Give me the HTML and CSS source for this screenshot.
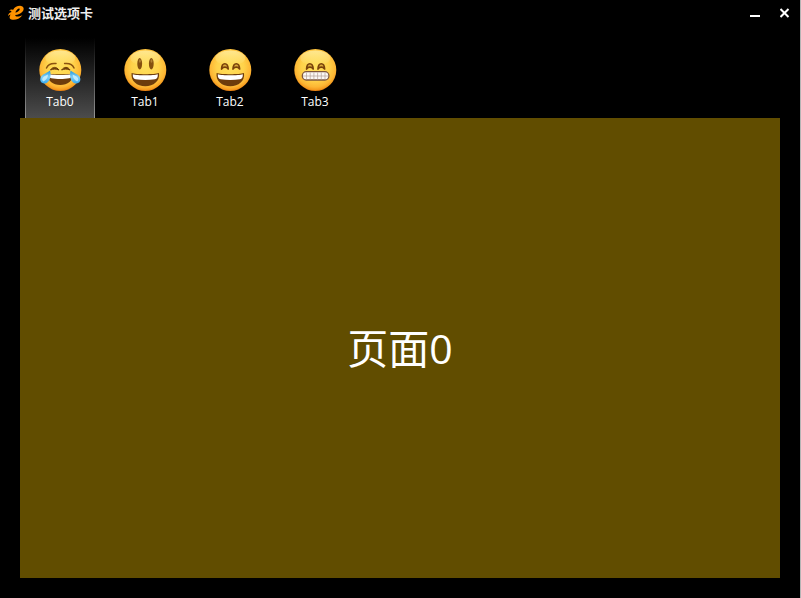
FILE: index.html
```html
<!DOCTYPE html>
<html lang="zh-CN">
<head>
<meta charset="utf-8">
<title>测试选项卡</title>
<link rel="stylesheet" href="styles.css">
</head>
<body>
<svg class="defs" width="0" height="0" aria-hidden="true">
  <defs>
    <radialGradient id="skin" cx="50%" cy="42%" r="59%">
      <stop offset="0" stop-color="#ffe05c"/>
      <stop offset=".55" stop-color="#ffd24a"/>
      <stop offset=".82" stop-color="#fdb634"/>
      <stop offset=".93" stop-color="#f59a1e"/>
      <stop offset="1" stop-color="#dc6f0c"/>
    </radialGradient>
    <linearGradient id="shine" x1="0" y1="0" x2="0" y2="1">
      <stop offset="0" stop-color="#fff6b8" stop-opacity=".65"/>
      <stop offset="1" stop-color="#fff6b8" stop-opacity="0"/>
    </linearGradient>
    <linearGradient id="tear" x1="0" y1="0" x2="0" y2="1">
      <stop offset="0" stop-color="#1f96dd"/>
      <stop offset=".5" stop-color="#7fd0f8"/>
      <stop offset="1" stop-color="#35a8ec"/>
    </linearGradient>
    <g id="face">
      <circle cx="22.3" cy="22" r="21" fill="url(#skin)"/>
      <ellipse cx="22.3" cy="10" rx="15" ry="7.5" fill="url(#shine)"/>
    </g>
    <g id="smile">
      <path d="M8.600 25C13 26.600 31.600 26.600 36 25C37.200 33 30.500 38.200 22.300 38.200S7.400 33 8.600 25Z" fill="#6d3c0c"/>
      <path d="M9.800 26.200C14 27.600 30.600 27.600 34.800 26.200C35 29.500 34 30.800 32 31.200C26 32.300 18.600 32.300 12.600 31.200C10.600 30.800 9.600 29.500 9.800 26.200Z" fill="#fff"/>
    </g>
    <g id="eyes" fill="#b87a22" fill-opacity=".5" stroke="#7a430b" stroke-width="1.700" stroke-linecap="round" stroke-linejoin="round">
      <path d="M13.600 21C13.800 14 19.800 14 20.200 21C18.400 18.600 15.400 18.600 13.600 21Z"/>
      <path d="M25 21C25.300 14 31.300 14 31.600 21C29.800 18.600 26.800 18.600 25 21Z"/>
    </g>
  </defs>
</svg>
<div class="window">
  <header class="titlebar">
    <svg class="logo" viewBox="0 0 16 16" aria-hidden="true">
      <path d="M1 5.500C2.600 4.400 4 4.400 5 5C6.600 2.100 9.800 .600 12.800 .900C16 1.300 16.400 4.200 14.600 6.500C12.700 8.900 9.800 9.900 7.200 9.900C7.400 11.800 10.400 12 14.400 10.200C11.800 13.600 8 15.200 4.600 14.800C1 14.300 1 11.700 2.600 9.400C1.600 9.600 .800 10.200 0 11C.200 8.600 1.800 7.400 3.600 6.900C3 5.800 2.200 5.400 1 5.500ZM7.300 7.500C9.600 7.300 12 5.300 11.700 3.900C11.200 2.600 8.200 4.500 7.300 7.500Z" fill="#ff9200" fill-rule="evenodd"/>
    </svg>
    <h1 class="title">测试选项卡</h1>
    <button class="control" type="button" aria-label="最小化">
      <svg viewBox="0 0 10 10"><path d="M0 8H10" stroke="#fff" stroke-width="2"/></svg>
    </button>
    <button class="control" type="button" aria-label="关闭">
      <svg viewBox="0 0 10 10"><path d="M.500 1L8.500 9M8.500 1L.500 9" stroke="#fff" stroke-width="2"/></svg>
    </button>
  </header>
  <nav class="tabs" role="tablist">
    <button class="tab active" id="tab0" type="button" role="tab" aria-selected="true" aria-controls="page">
      <svg class="emoji" viewBox="0 0 44 44" aria-hidden="true">
        <use href="#face"/>
        <path d="M8.500 20C10 16.500 13.500 15 18 15.500M26.600 15.500C31 15 34.600 16.500 36 20" fill="none" stroke="#8a5210" stroke-width="1.500" stroke-linecap="round"/>
        <path d="M12.500 22C14.500 18.500 18.500 18.500 21 22C18 20.800 15.500 20.800 12.500 22ZM23.600 22C26 18.500 30 18.500 32 22C29 20.800 26.600 20.800 23.600 22Z" fill="#704008" stroke="#704008"/>
        <path d="M9.500 25.500C14 26.600 30.600 26.600 35 25.500C35.500 32.500 29.500 37 22.300 37S9 32.500 9.500 25.500Z" fill="#6d3c0c"/>
        <path d="M11 26.300C15 27.300 29.600 27.300 33.600 26.300C33.600 29.300 32.500 30 31 30.300C26 31.200 18.500 31.200 13.500 30.300C12 30 11 29.300 11 26.300Z" fill="#fff"/>
        <path d="M12 22.500C13.500 28 12 34.500 7 35.500C3 36 1 32 3 28.800C4.800 26 8.500 25.500 12 22.500Z" fill="url(#tear)"/>
        <path d="M32.600 22.500C31.100 28 32.600 34.500 37.600 35.500C41.600 36 43.600 32 41.600 28.800C39.800 26 36.100 25.500 32.600 22.500Z" fill="url(#tear)"/>
        <path d="M10 26.500C10 30 8 32 5.500 33.500C3 31.500 4 29 10 26.500ZM34.600 26.500C34.600 30 36.600 32 39.100 33.500C41.600 31.500 40.600 29 34.600 26.500Z" fill="#d8f5ff" opacity=".75"/>
      </svg>
      <span>Tab0</span>
    </button>
    <button class="tab" type="button" role="tab" aria-selected="false">
      <svg class="emoji" viewBox="0 0 44 44" aria-hidden="true">
        <use href="#face"/>
        <g fill="#85500f"><ellipse cx="16.700" cy="15.700" rx="2.400" ry="5.700"/><ellipse cx="28.300" cy="15.700" rx="2.400" ry="5.700"/></g>
        <g fill="#b18132"><ellipse cx="16.900" cy="13" rx="1" ry="1.700"/><ellipse cx="28.500" cy="13" rx="1" ry="1.700"/></g>
        <use href="#smile"/>
      </svg>
      <span>Tab1</span>
    </button>
    <button class="tab" type="button" role="tab" aria-selected="false">
      <svg class="emoji" viewBox="0 0 44 44" aria-hidden="true">
        <use href="#face"/><use href="#eyes"/><use href="#smile"/>
      </svg>
      <span>Tab2</span>
    </button>
    <button class="tab" type="button" role="tab" aria-selected="false">
      <svg class="emoji" viewBox="0 0 44 44" aria-hidden="true">
        <use href="#face"/><use href="#eyes"/>
        <rect x="9.300" y="23.700" width="26.600" height="8.300" rx="4" fill="#fbf8f6" stroke="#7e563c" stroke-width="1.300"/>
        <path d="M10 28H35.500M13.500 24.500V31.500M17.200 24.500V31.500M20.900 24.500V31.500M24.600 24.500V31.500M28.300 24.500V31.500M32 24.500V31.500" fill="none" stroke="#b4a097" stroke-width=".700"/>
      </svg>
      <span>Tab3</span>
    </button>
  </nav>
  <main class="page" id="page" role="tabpanel" aria-labelledby="tab0">页面0</main>
</div>
</body>
</html>
```
FILE: styles.css
```css
* {
  box-sizing: border-box;
}

body {
  margin: 0;
  background: #000;
  color: #fff;
  font-family: "Open Sans", "Noto Sans CJK SC", sans-serif;
}

button {
  padding: 0;
  border: 0;
  background: none;
  color: inherit;
  font: inherit;
}

.defs {
  position: absolute;
}

.window {
  display: flex;
  flex-direction: column;
  min-height: 100vh;
  padding-bottom: 20px;
  border-right: 1px solid #b4b4b4;
}

.titlebar {
  display: flex;
  align-items: center;
  height: 26px;
  padding: 0 10px 0 8px;
}

.logo {
  width: 16px;
  height: 16px;
  margin-right: 4px;
}

.title {
  flex: 1;
  margin: 0;
  color: #eee;
  font-family: "Noto Sans CJK SC", sans-serif;
  font-size: 13px;
  font-weight: 700;
  line-height: 26px;
}

.control {
  display: flex;
  width: 10px;
  height: 10px;
  margin-left: 20px;
}

.control svg {
  width: 10px;
  height: 10px;
}

.tabs {
  display: flex;
  gap: 15px;
  margin-top: 12px;
  padding: 0 25px;
}

.tab {
  display: flex;
  flex-direction: column;
  align-items: center;
  width: 70px;
  height: 80px;
  padding-top: 10px;
  font-size: 12px;
  line-height: 20px;
}

.tab.active {
  border: solid;
  border-width: 0 1px;
  border-image: linear-gradient(#000, #999) 1;
  background: linear-gradient(#000, #4c4c4c);
}

.emoji {
  width: 44px;
  height: 44px;
}

.page {
  display: flex;
  flex: 1;
  align-items: center;
  justify-content: center;
  margin: 0 20px;
  background: #614d00;
  font-size: 41px;
  line-height: 56px;
}
```
